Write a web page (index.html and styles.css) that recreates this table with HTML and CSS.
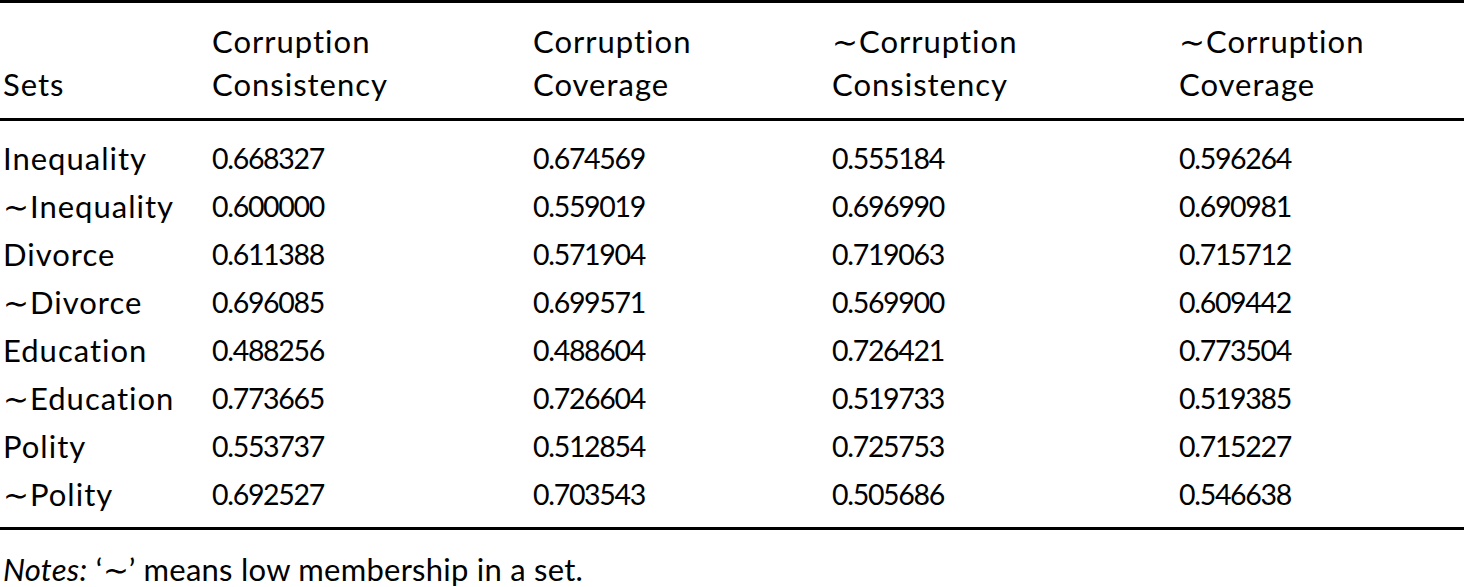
FILE: index.html
```html
<!DOCTYPE html>
<html>
<head>
<meta charset="utf-8">
<link rel="stylesheet" href="styles.css">
</head>
<body>
<table class="qca">
  <colgroup>
    <col class="c1"><col class="c2"><col class="c3"><col class="c4"><col class="c5">
  </colgroup>
  <thead>
    <tr>
      <th>Sets</th>
      <th>Corruption<br>Consistency</th>
      <th>Corruption<br>Coverage</th>
      <th>∼Corruption<br>Consistency</th>
      <th>∼Corruption<br>Coverage</th>
    </tr>
  </thead>
  <tbody>
    <tr><td>Inequality</td><td>0.668327</td><td>0.674569</td><td>0.555184</td><td>0.596264</td></tr>
    <tr><td>∼Inequality</td><td>0.600000</td><td>0.559019</td><td>0.696990</td><td>0.690981</td></tr>
    <tr><td>Divorce</td><td>0.611388</td><td>0.571904</td><td>0.719063</td><td>0.715712</td></tr>
    <tr><td>∼Divorce</td><td>0.696085</td><td>0.699571</td><td>0.569900</td><td>0.609442</td></tr>
    <tr><td>Education</td><td>0.488256</td><td>0.488604</td><td>0.726421</td><td>0.773504</td></tr>
    <tr><td>∼Education</td><td>0.773665</td><td>0.726604</td><td>0.519733</td><td>0.519385</td></tr>
    <tr><td>Polity</td><td>0.553737</td><td>0.512854</td><td>0.725753</td><td>0.715227</td></tr>
    <tr><td>∼Polity</td><td>0.692527</td><td>0.703543</td><td>0.505686</td><td>0.546638</td></tr>
  </tbody>
</table>
<p class="notes"><em>Notes:</em> ‘∼’ means low membership in a set.</p>
</body>
</html>
```
FILE: styles.css
```css
html, body {
  margin: 0;
  padding: 0;
  background: #fff;
}
body {
  width: 1464px;
  font-family: "Lato", "Open Sans", sans-serif;
  font-size: 31px;
  letter-spacing: 1px;
  font-variant-ligatures: none;
  color: #000;
}
.qca {
  width: 1464px;
  border-collapse: collapse;
  table-layout: fixed;
  border-top: 3px solid #000;
  border-bottom: 3px solid #000;
}
.c1 { width: 212px; }
.c2 { width: 321px; }
.c3 { width: 299px; }
.c4 { width: 347px; }
.c5 { width: 285px; }
.qca th {
  font-weight: normal;
  text-align: left;
  vertical-align: bottom;
  line-height: 43px;
  padding: 17px 0 12px 0;
  border-bottom: 3px solid #000;
  white-space: nowrap;
}
.qca td {
  height: 48px;
  line-height: 48px;
  padding: 0;
  white-space: nowrap;
}
.qca td + td {
  font-size: 28.5px;
  letter-spacing: -1.3px;
}
.qca th:first-child,
.qca td:first-child {
  padding-left: 3px;
}
.qca tbody tr:first-child td {
  padding-top: 13px;
}
.qca tbody tr:last-child td {
  padding-bottom: 9px;
}
.notes {
  margin: 19px 0 0 3px;
  line-height: 40px;
  letter-spacing: 0.25px;
}
.notes em {
  font-style: italic;
}
```
